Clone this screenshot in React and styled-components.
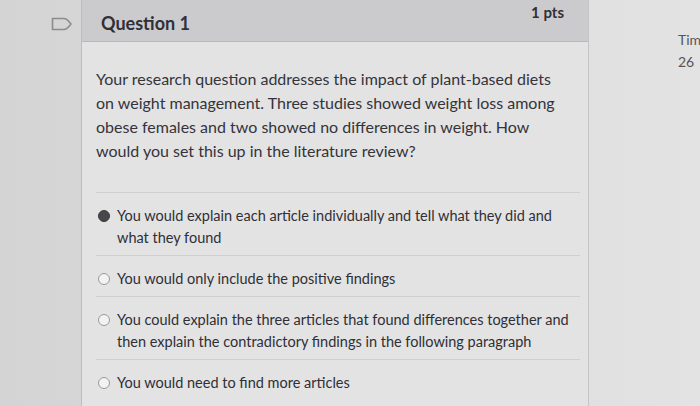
import React from "react";
import styled, { createGlobalStyle } from "styled-components";

const answers = [
  { text: "You would explain each article individually and tell what they did and what they found", selected: true },
  { text: "You would only include the positive findings" },
  { text: "You could explain the three articles that found differences together and then explain the contradictory findings in the following paragraph" },
  { text: "You would need to find more articles" },
];

const App = () => {
  return (
    <>
      <Global />
      <Page>
        <Gutter>
          <svg width="22" height="14" viewBox="0 0 22 14">
            <path d="M1.5 1.5 H13 Q15 1.5 17 3.5 L20 7 L17 10.5 Q15 12.5 13 12.5 H1.5 Z" fill="none" stroke="#8c8c8f" strokeWidth="1.6" strokeLinejoin="round" />
          </svg>
        </Gutter>
        <Card>
          <Header>
            <Title>Question 1</Title>
            <Points>1 pts</Points>
          </Header>
          <Body>
            <Prompt>
              Your research question addresses the impact of plant-based diets on weight management. Three studies showed weight loss among obese females and two showed no differences in weight. How would you set this up in the literature review?
            </Prompt>
            <Answers>
              {answers.map((a) => (
                <Answer key={a.text}>
                  <Radio selected={a.selected} />
                  <AnswerText>{a.text}</AnswerText>
                </Answer>
              ))}
            </Answers>
          </Body>
        </Card>
        <Side>
          <SideText>Tim</SideText>
          <SideText>26</SideText>
        </Side>
      </Page>
    </>
  );
};

const Global = createGlobalStyle`
  html, body {
    margin: 0;
    height: 100%;
    overflow: hidden;
  }
  body {
    background: #dcdcdc;
    font-family: Lato, "Open Sans", sans-serif;
    color: #2f2f33;
  }
`;

const Page = styled.div`
  display: flex;
  width: 700px;
  height: 406px;
  background: linear-gradient(90deg, #d4d4d5 0%, #dcdcdd 60%, #e3e3e4 100%);
`;

const Gutter = styled.div`
  width: 81px;
  display: flex;
  justify-content: flex-start;
  padding: 17px 0 0 51px;
  box-sizing: border-box;
`;

const Card = styled.div`
  width: 506px;
  display: flex;
  flex-direction: column;
  border-left: 1px solid #bdbdbf;
  border-right: 1px solid #c4c4c6;
`;

const Header = styled.div`
  height: 41px;
  display: flex;
  justify-content: space-between;
  align-items: flex-start;
  padding: 0 24px 0 19px;
  background: #cbcbce;
  border-bottom: 1px solid #b8b8bb;
`;

const Title = styled.div`
  font-size: 18px;
  font-weight: 700;
  color: #303036;
  margin-top: 12px;
`;

const Points = styled.div`
  font-size: 15px;
  font-weight: 700;
  color: #303036;
  margin-top: 3px;
`;

const Body = styled.div`
  flex: 1;
  padding: 25px 8px 0 14px;
  background: #e3e3e4;
`;

const Prompt = styled.p`
  margin: 0;
  width: 470px;
  font-size: 16px;
  line-height: 24px;
  color: #34343a;
`;

const Answers = styled.div`
  margin-top: 29px;
  border-top: 1px solid #cfcfd1;
`;

const Answer = styled.div`
  display: flex;
  align-items: flex-start;
  gap: 7px;
  padding: 12px 0 6px 2px;
  border-bottom: 1px solid #cfcfd1;
  &:last-child {
    border-bottom: none;
  }
`;

const Radio = styled.span`
  flex: none;
  width: 12px;
  height: 12px;
  margin-top: 5px;
  border-radius: 50%;
  box-sizing: border-box;
  border: 1px solid ${(p) => (p.selected ? "#3a3a3e" : "#9a9a9e")};
  background: ${(p) => (p.selected ? "#48484c" : "#f2f2f2")};
`;

const AnswerText = styled.span`
  font-size: 14.5px;
  line-height: 22px;
  width: 462px;
  color: #2f2f35;
`;

const Side = styled.div`
  flex: 1;
  padding: 31px 0 0 89px;
  display: flex;
  flex-direction: column;
  gap: 5px;
  overflow: hidden;
`;

const SideText = styled.div`
  font-size: 14px;
  color: #55555a;
  white-space: nowrap;
`;

export default App;
